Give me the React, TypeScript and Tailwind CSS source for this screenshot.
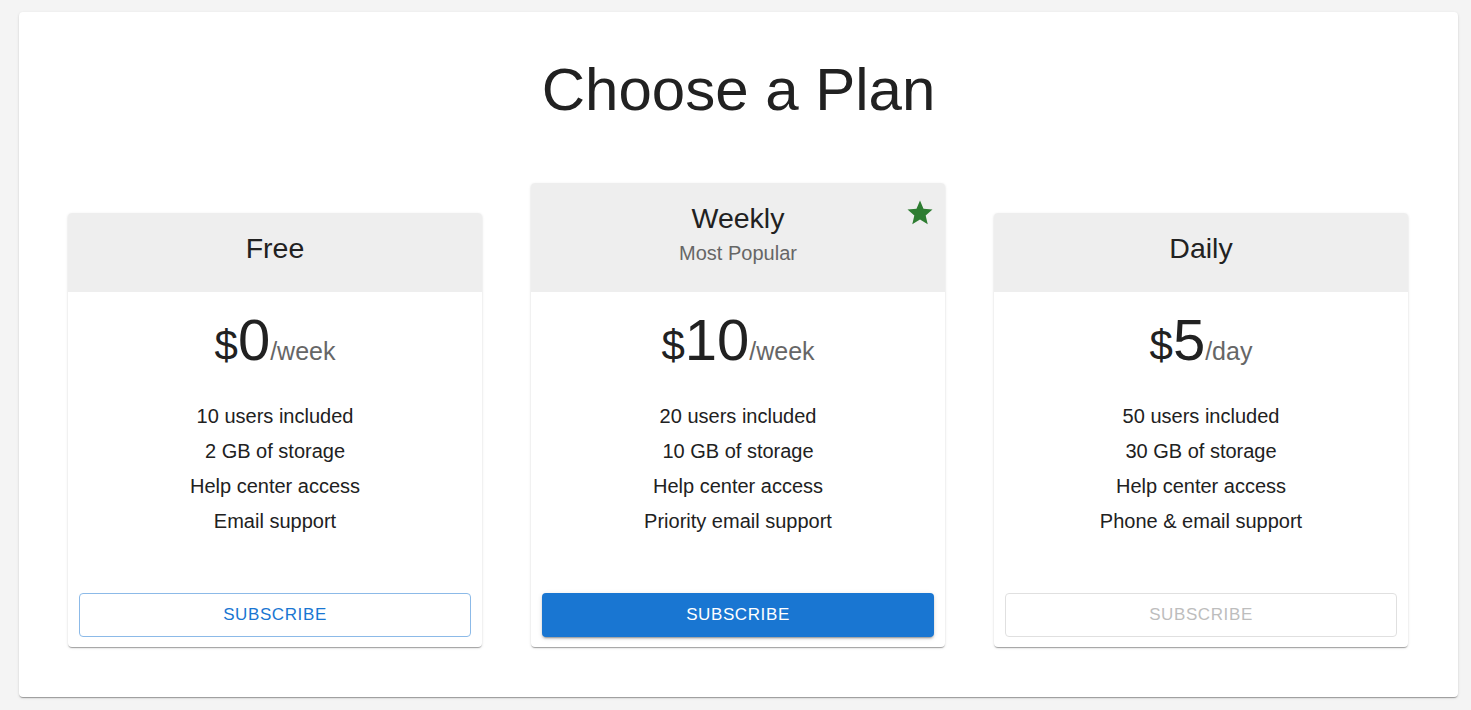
type Tier = {
    title: string;
    subheader?: string;
    price: string;
    period: string;
    features: string[];
    variant: "outlined" | "contained" | "disabled";
};

const tiers: Tier[] = [
    {
        title: "Free",
        price: "0",
        period: "/week",
        features: ["10 users included", "2 GB of storage", "Help center access", "Email support"],
        variant: "outlined",
    },
    {
        title: "Weekly",
        subheader: "Most Popular",
        price: "10",
        period: "/week",
        features: ["20 users included", "10 GB of storage", "Help center access", "Priority email support"],
        variant: "contained",
    },
    {
        title: "Daily",
        price: "5",
        period: "/day",
        features: ["50 users included", "30 GB of storage", "Help center access", "Phone & email support"],
        variant: "disabled",
    },
];

const paperShadow =
    "shadow-[0px_2px_1px_-1px_rgba(0,0,0,0.2),0px_1px_1px_0px_rgba(0,0,0,0.14),0px_1px_3px_0px_rgba(0,0,0,0.12)]";

function StarIcon() {
    return (
        <svg viewBox="0 0 24 24" className="absolute right-[10px] top-[15px] w-[30px] h-[30px]" fill="#2e7d32">
            <path d="M12 17.27 18.18 21l-1.64-7.03L22 9.24l-7.19-.61L12 2 9.19 8.63 2 9.24l5.46 4.73L5.82 21z" />
        </svg>
    );
}

function SubscribeButton({ variant }: { variant: Tier["variant"] }) {
    const base = "w-full h-[44px] rounded-[4px] text-[17px] tracking-[0.6px] uppercase flex items-center justify-center";
    if (variant === "contained") {
        return (
            <button
                className={`${base} bg-[#1976d2] text-white shadow-[0px_3px_1px_-2px_rgba(0,0,0,0.2),0px_2px_2px_0px_rgba(0,0,0,0.14),0px_1px_5px_0px_rgba(0,0,0,0.12)]`}
            >
                Subscribe
            </button>
        );
    }
    if (variant === "disabled") {
        return (
            <button disabled className={`${base} border border-[#e0e0e0] text-[#bdbdbd]`}>
                Subscribe
            </button>
        );
    }
    return <button className={`${base} border border-[#8cbae8] text-[#1976d2]`}>Subscribe</button>;
}

function PlanCard({ tier }: { tier: Tier }) {
    return (
        <div className={`relative w-[414px] bg-white rounded-[4px] overflow-hidden ${paperShadow}`}>
            <div className="relative bg-[#eeeeee] pt-[16px] pb-[24px] text-center">
                <div className="text-[28.5px] leading-[39px] text-[#212121]">{tier.title}</div>
                {tier.subheader && (
                    <div className="text-[20px] leading-[30px] text-[#666666]">{tier.subheader}</div>
                )}
                {tier.subheader && <StarIcon />}
            </div>

            <div className="flex items-baseline justify-center mt-[19px] h-[58px]">
                <span className="text-[42px] leading-[42px] text-[#212121]">$</span>
                <span className="text-[58px] leading-[58px] text-[#212121]">{tier.price}</span>
                <span className="text-[25px] leading-[25px] text-[#666666]">{tier.period}</span>
            </div>

            <ul className="mt-[30px] text-center">
                {tier.features.map((line) => (
                    <li key={line} className="text-[20px] leading-[35px] text-[#212121]">
                        {line}
                    </li>
                ))}
            </ul>

            <div className="px-[11px] pt-[54px] pb-[10px]">
                <SubscribeButton variant={tier.variant} />
            </div>
        </div>
    );
}

export default function App() {
    return (
        <div className="min-h-[710px] bg-[#f4f4f4] pt-[12px] font-['Liberation_Sans',Arial,sans-serif]">
            <div className={`w-[1439px] ml-[19px] bg-white rounded-[4px] px-[49px] pt-[42px] pb-[50px] ${paperShadow}`}>
                <h2 className="text-[60px] leading-[72px] text-center text-[#212121]">Choose a Plan</h2>
                <div className="flex items-end gap-[49px] mt-[57px]">
                    {tiers.map((tier) => (
                        <PlanCard key={tier.title} tier={tier} />
                    ))}
                </div>
            </div>
        </div>
    );
}
